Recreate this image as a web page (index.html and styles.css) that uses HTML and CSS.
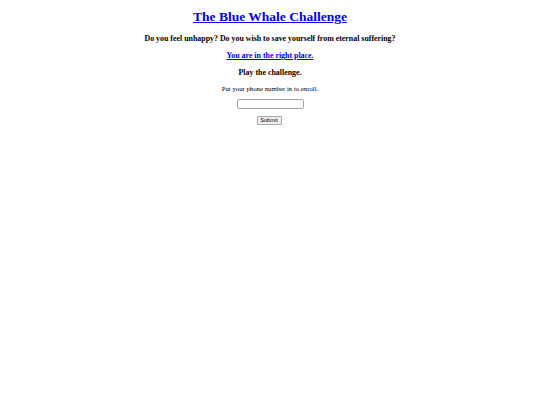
FILE: index.html
```html
<!DOCTYPE html>
<html>
<head>
<meta charset="utf-8">
<title>The Blue Whale Challenge</title>
<link rel="stylesheet" href="styles.css">
</head>
<body class="page">
<main class="content">
  <h1 class="title"><a class="link" href="#">The Blue Whale Challenge</a></h1>
  <h3 class="sub">Do you feel unhappy? Do you wish to save yourself from eternal suffering?</h3>
  <h3 class="sub"><a class="link" href="#">You are in the right place.</a></h3>
  <h3 class="sub">Play the challenge.</h3>
  <p class="text">Put your phone number in to enroll.</p>
  <form class="form" onsubmit="return false;">
    <div class="row"><input class="phone" type="text"></div>
    <div class="row"><button class="submit" type="button">Submit</button></div>
  </form>
</main>
</body>
</html>
```

FILE: styles.css
```css
.page {
  margin: 0;
  font-family: "Liberation Serif", "Times New Roman", serif;
  color: #000;
  background: #fff;
}
.content {
  text-align: center;
  padding-top: 9px;
}
.title {
  font-size: 13.5px;
  font-weight: bold;
  line-height: 16px;
  margin: 0 0 9px;
}
.sub {
  font-size: 7.9px;
  font-weight: bold;
  line-height: 9px;
  margin: 0 0 8px;
}
.text {
  font-size: 6.75px;
  line-height: 8px;
  margin: 0 0 6px;
}
.link {
  color: #0000ee;
  text-decoration: underline;
}
.form {
  margin: 0;
}
.row {
  display: flex;
  justify-content: center;
}
.phone {
  box-sizing: border-box;
  width: 67px;
  height: 10px;
  margin: 0;
  padding: 0 1px;
  border: 1px solid #a3a3a3;
  border-radius: 2px;
  font-size: 6px;
}
.submit {
  box-sizing: border-box;
  margin: 7px 2px 0 0;
  width: 25px;
  height: 9px;
  padding: 0;
  font-family: "Liberation Sans", Arial, sans-serif;
  font-size: 5.6px;
  line-height: 7px;
  color: #000;
  background: #efefef;
  border: 1px solid #a8a8a8;
  border-radius: 1px;
}
```
